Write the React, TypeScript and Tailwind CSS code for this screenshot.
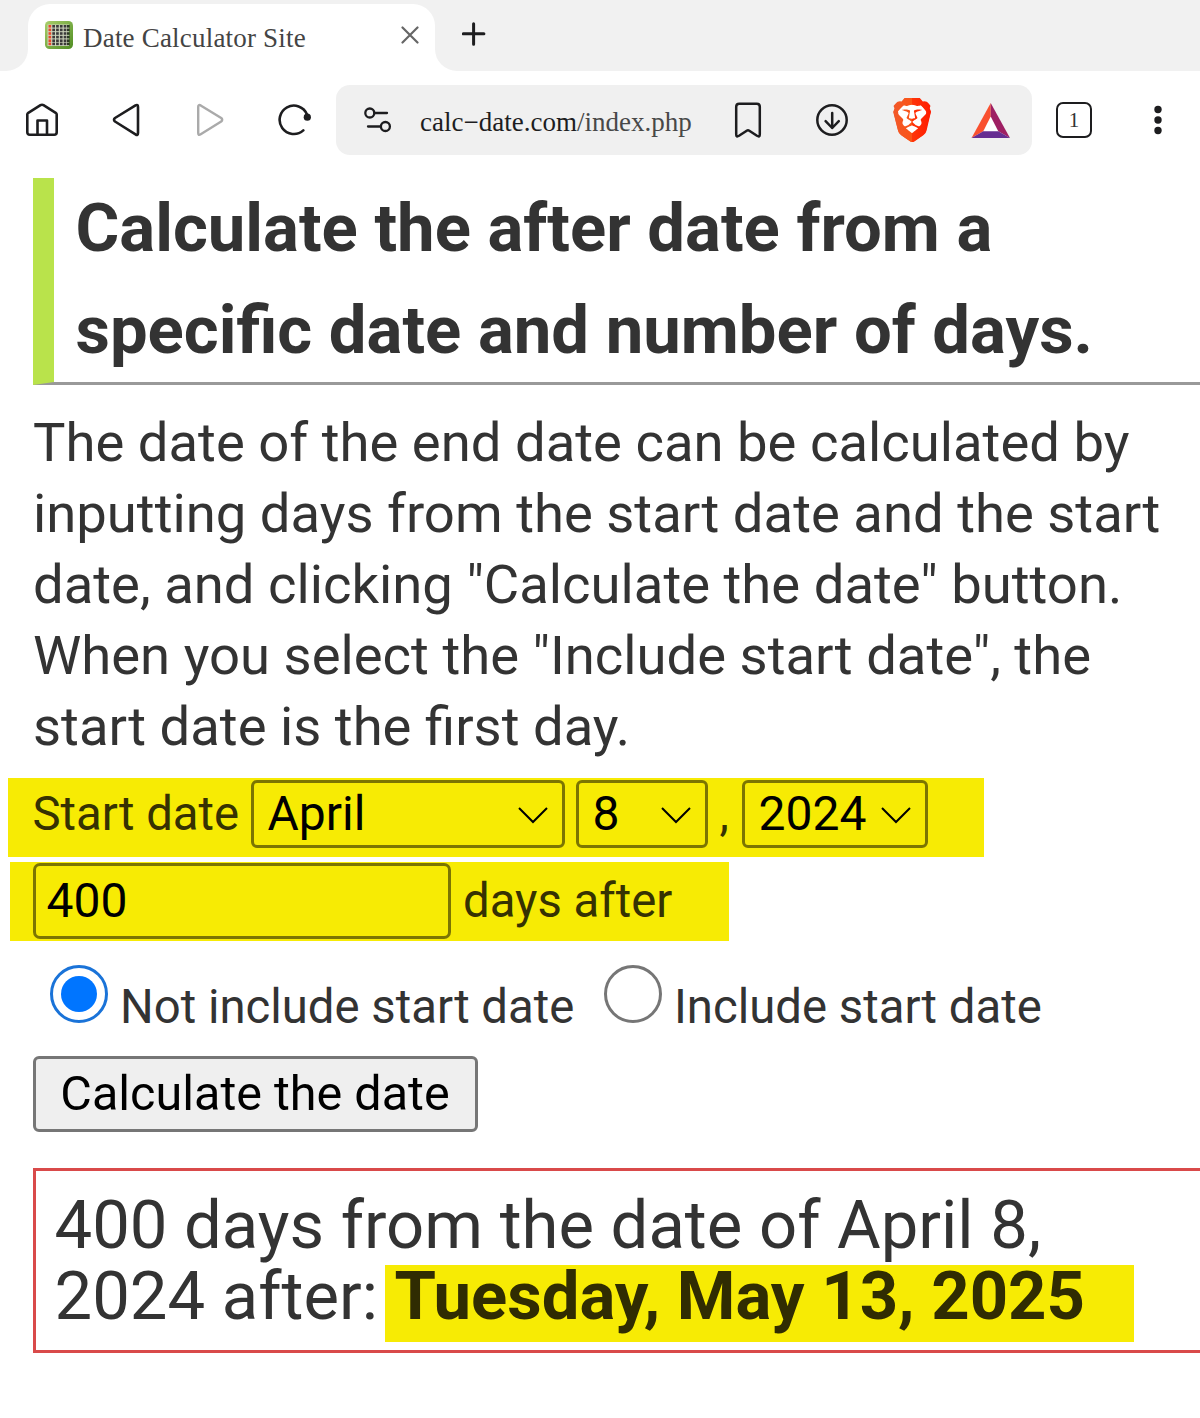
import React from "react";
import { SiBrave } from "react-icons/si";

const ink = "#1d1d1f";

function Favicon() {
  const cols = [48.5, 52.3, 56.1, 59.9, 63.7, 67];
  const rows = [26, 29.6, 33.2, 36.8, 40.4, 43.6];
  return (
    <svg className="h-7 w-7 shrink-0" viewBox="45 21 28 28">
      <defs>
        <linearGradient id="fav" x1="0" y1="0" x2="1" y2="1">
          <stop offset="0" stopColor="#a9cf6b" />
          <stop offset="1" stopColor="#4f8d22" />
        </linearGradient>
      </defs>
      <rect x="45" y="21" width="28" height="28" rx="4.5" fill="url(#fav)" />
      <rect x="47.5" y="24.5" width="21.5" height="21.5" fill="#cfd6bd" />
      {cols.map((x, i) =>
        rows.map((y) => (
          <rect key={`${x}-${y}`} x={x} y={y - 1} width="2.7" height="2.6" fill={i === 0 ? "#e8472a" : i === 5 ? "#2c3a24" : "#3a3a3a"} />
        )),
      )}
    </svg>
  );
}

function BraveLogo() {
  return (
    <div className="relative h-[46px] w-[40px]">
      <svg className="h-[46px] w-[40px]" viewBox="892 97 40 46">
        <defs>
          <linearGradient id="brave" x1="0" y1="0" x2="1" y2="0">
            <stop offset="0" stopColor="#f1592a" />
            <stop offset="0.49" stopColor="#fb5417" />
            <stop offset="0.51" stopColor="#ff3409" />
            <stop offset="1" stopColor="#ff1c00" />
          </linearGradient>
        </defs>
        <path
          d="M904.5 98H919.8L922.8 101.4Q926.6 100.6 928.4 103.2L930.2 105.6L929.6 108L931 111.6L926.6 130.4Q926 133.2 923.6 134.9L914.4 141.4Q912.3 142.8 910.2 141.4L901 134.9Q898.6 133.2 898 130.4L893.4 111.6L894.9 108L894.2 105.6L896 103.2Q897.8 100.6 901.6 101.4Z"
          fill="url(#brave)"
        />
        <path d="M904.5 104.5H920L926.5 111L925.5 120L918.5 130L912.3 134L906 130L899 120L898 111Z" fill="#fff" />
      </svg>
      <SiBrave className="absolute left-[-2px] top-[1px] h-[44px] w-[44px]" fill="url(#brave)" />
    </div>
  );
}

function Chevron() {
  return (
    <svg className="mt-[2px] h-[17px] w-[30px] shrink-0" viewBox="0 0 30 17" fill="none" stroke="#000" strokeWidth="2">
      <path d="M1 1l14 14L29 1" />
    </svg>
  );
}

function Select({ children, className }: { children: string; className: string }) {
  return (
    <button className={`flex h-[68px] items-center justify-between rounded-[6px] border-3 border-[#7b7502] pl-[14px] pr-[14px] text-[48px] text-black ${className}`}>
      <span>{children}</span>
      <Chevron />
    </button>
  );
}

export default function App() {
  return (
    <div className="h-[1418px] w-[1200px] overflow-hidden bg-white font-['Roboto',sans-serif] text-[#333] whitespace-nowrap">
      <header className="flex h-[71px] bg-white">
        <div className="w-7 rounded-br-[22px] bg-[#f1f1f1]" />
        <div className="w-[407px] bg-[#f1f1f1] pt-1">
          <div className="flex h-[67px] items-start rounded-t-[22px] bg-white pl-[17px] pt-[17px]">
            <Favicon />
            <span className="ml-[10px] mt-[2px] w-[318px] font-['Liberation_Serif',serif] text-[27px] leading-[30px] tracking-[0.2px] text-[#444]">Date Calculator Site</span>
            <svg className="mt-[5px] h-[18px] w-[18px] shrink-0" viewBox="0 0 18 18" stroke="#666" strokeWidth="2.2" strokeLinecap="round">
              <path d="M1.5 1.5l15 15M16.5 1.5l-15 15" />
            </svg>
          </div>
        </div>
        <div className="flex-1 rounded-bl-[22px] bg-[#f1f1f1] pl-[27px] pt-[22px]">
          <svg className="h-6 w-6" viewBox="0 0 24 24" stroke={ink} strokeWidth="3" strokeLinecap="round">
            <path d="M11.6 1.7v20.6M1.3 11.8h20.6" />
          </svg>
        </div>
      </header>

      <nav className="flex h-[98px] items-center">
        <svg className="ml-[24px] h-9 w-9" viewBox="0 0 36 36" fill="none" stroke={ink} strokeWidth="2.6" strokeLinejoin="round">
          <path d="M3.3 12.5Q3.3 11.5 4.3 10.8L16.5 3.2Q18 2.3 19.5 3.2L31.7 10.8Q32.7 11.5 32.7 12.5V30.2Q32.7 32.7 30.2 32.7H5.8Q3.3 32.7 3.3 30.2Z" />
          <path d="M13.5 32.7V18.5H23V32.7" />
        </svg>
        <svg className="ml-[51px] h-9 w-9" viewBox="0 0 36 36" fill="none" stroke={ink} strokeWidth="2.6" strokeLinejoin="round">
          <path d="M4 16L24.5 3.4Q27 2.2 27 5V31Q27 34 24.5 32.3L4 19.5Q2 17.8 4 16Z" />
        </svg>
        <svg className="ml-[49px] h-9 w-9" viewBox="0 0 36 36" fill="none" stroke="#aaa" strokeWidth="2.4" strokeLinejoin="round">
          <path d="M25.2 16L4.7 3.4Q2.2 2.2 2.2 5V31Q2.2 34 4.7 32.3L25.2 19.5Q27.2 17.8 25.2 16Z" />
        </svg>
        <svg className="ml-[46px] h-9 w-9" viewBox="0 0 36 36" fill="none" stroke={ink} strokeWidth="2.6" strokeLinecap="round">
          <path d="M25.3 28.4A14.2 14.2 0 1 1 29 12.5" />
          <circle cx="29.3" cy="15.2" r="3.6" fill={ink} stroke="none" />
        </svg>
        <div className="ml-[22px] flex h-[70px] w-[696px] items-center rounded-[14px] bg-[#f0f0f0]">
          <svg className="ml-[28px] h-7 w-7 shrink-0" viewBox="0 0 28 28" fill="none" stroke={ink} strokeWidth="2.3" strokeLinecap="round">
            <circle cx="5.8" cy="7" r="4.5" />
            <path d="M10.5 7H23M4 20.5H16.2" />
            <circle cx="21.4" cy="20.5" r="4.5" />
          </svg>
          <div className="ml-[28px] mt-[3px] w-[272px] overflow-hidden font-['Liberation_Serif',serif] text-[27px] leading-9 text-[#1d1d1f]">
            <span>calc−date.com</span><span className="text-[#484848]">/index.php</span>
          </div>
          <svg className="ml-[42px] h-9 w-[28px] shrink-0" viewBox="0 0 28 36" fill="none" stroke={ink} strokeWidth="2.5" strokeLinejoin="round">
            <path d="M5.2 1.8H22.8Q25.8 1.8 25.8 4.8V32.5Q25.8 35.5 23 33.8L15.3 28.7Q14 27.8 12.7 28.7L5 33.8Q2.2 35.5 2.2 32.5V4.8Q2.2 1.8 5.2 1.8Z" />
          </svg>
          <svg className="ml-[54px] h-8 w-8 shrink-0" viewBox="0 0 32 32" fill="none" stroke={ink} strokeWidth="2.5" strokeLinecap="round" strokeLinejoin="round">
            <circle cx="16" cy="16" r="14.7" />
            <path d="M16.2 9V24M9.6 17.2L16.2 24L22.8 17.2" />
          </svg>
          <div className="ml-[44px] mr-[3px] w-10 shrink-0">
            <BraveLogo />
          </div>
          <svg className="ml-[36px] mt-[1px] h-[37px] w-[40px] shrink-0" viewBox="0 0 40 38">
            <path d="M19.7 14L12 31H27.5Z" fill="#fff" />
            <path d="M19.7 1V15L12 30L0 37Z" fill="#f9502f" />
            <path d="M19.7 1L39.5 37L27.5 30L19.7 15Z" fill="#9e1f63" />
            <path d="M0 37L12 30H27.5L39.5 37Z" fill="#662d91" />
          </svg>
        </div>
        <div className="ml-[24px] flex h-9 w-9 items-center justify-center rounded-[7px] border-[2.5px] border-[#1d1d1f] pt-px font-['Liberation_Serif',serif] text-[21px] leading-none text-[#333]">1</div>
        <svg className="ml-[62px] h-8 w-8" viewBox="0 0 32 32" fill={ink}>
          <circle cx="4" cy="5.5" r="3.7" />
          <circle cx="4" cy="16" r="3.7" />
          <circle cx="4" cy="26.5" r="3.7" />
        </svg>
      </nav>

      <main className="pl-[32.5px] pt-[9px]">
        <h1 className="flow-root h-[207px] border-b-3 border-l-[21px] border-b-[#999] border-l-[#b9e34b] pl-[22px] text-[67px] font-bold leading-[102px]">
          <span className="-mt-px block">
            Calculate the after date from a<br />
            specific date and number of days.
          </span>
        </h1>
        <p className="mt-[22px] pl-[0.5px] text-[54.43px] leading-[71px]">
          The date of the end date can be calculated by<br />
          inputting days from the start date and the start<br />
          date, and clicking "Calculate the date" button.<br />
          When you select the "Include start date", the<br />
          start date is the first day.
        </p>

        <form className="text-[47.3px] leading-[68px]" onSubmit={(e) => e.preventDefault()}>
          <div className="-ml-[25px] mt-[16px] flex h-[79px] w-[976px] items-start bg-[#f7eb04] pl-[25px] pt-[2px] text-[#363202]">
            <span className="w-[218px]">Start date</span>
            <Select className="w-[314px]">April</Select>
            <Select className="ml-[11px] w-[132px]">8</Select>
            <span className="w-[34px] pl-[12px]">,</span>
            <Select className="w-[186px]">2024</Select>
          </div>
          <div className="-ml-[23px] mt-[5px] flex h-[79px] w-[719px] items-start bg-[#f7eb04] pl-[23px] pt-[1px] text-[#363202]">
            <input className="h-[76px] w-[418px] rounded-[7px] border-3 border-[#7b7502] bg-transparent pb-[2px] pl-[11px] text-[48px] text-black outline-none" defaultValue="400" />
            <span className="ml-[12.5px] leading-[77px]">days after</span>
          </div>
          <div className="mt-[24px] flex h-[76px] items-start pl-[17px]">
            <span className="flex h-[58px] w-[58px] items-center justify-center rounded-full border-3 border-[#1a73d8]">
              <span className="h-9 w-9 rounded-full bg-[#0075ff]" />
            </span>
            <span className="ml-[12.5px] w-[483.5px] pt-[8px]">Not include start date</span>
            <span className="h-[58px] w-[58px] rounded-full border-3 border-[#767676]" />
            <span className="ml-[12.5px] pt-[8px]">Include start date</span>
          </div>
          <button className="mt-[15px] block h-[76px] w-[445px] rounded-[6px] border-3 border-[#767676] bg-[#efefef] text-[48.5px] text-black">Calculate the date</button>
        </form>

        <div className="mt-[36px] h-[185px] border-3 border-r-0 border-[#d94a4a] pl-[19px] pt-[19px] text-[67px] leading-[71px]">
          <div>400 days from the date of April 8,</div>
          <div className="flex">
            <span className="w-[330px]">2024 after:</span>
            <span className="mt-[4px] h-[77px] w-[749px] bg-[#f7eb04] pl-[10px] font-bold leading-[63px] text-[#302c02]">Tuesday, May 13, 2025</span>
          </div>
        </div>
      </main>
    </div>
  );
}
